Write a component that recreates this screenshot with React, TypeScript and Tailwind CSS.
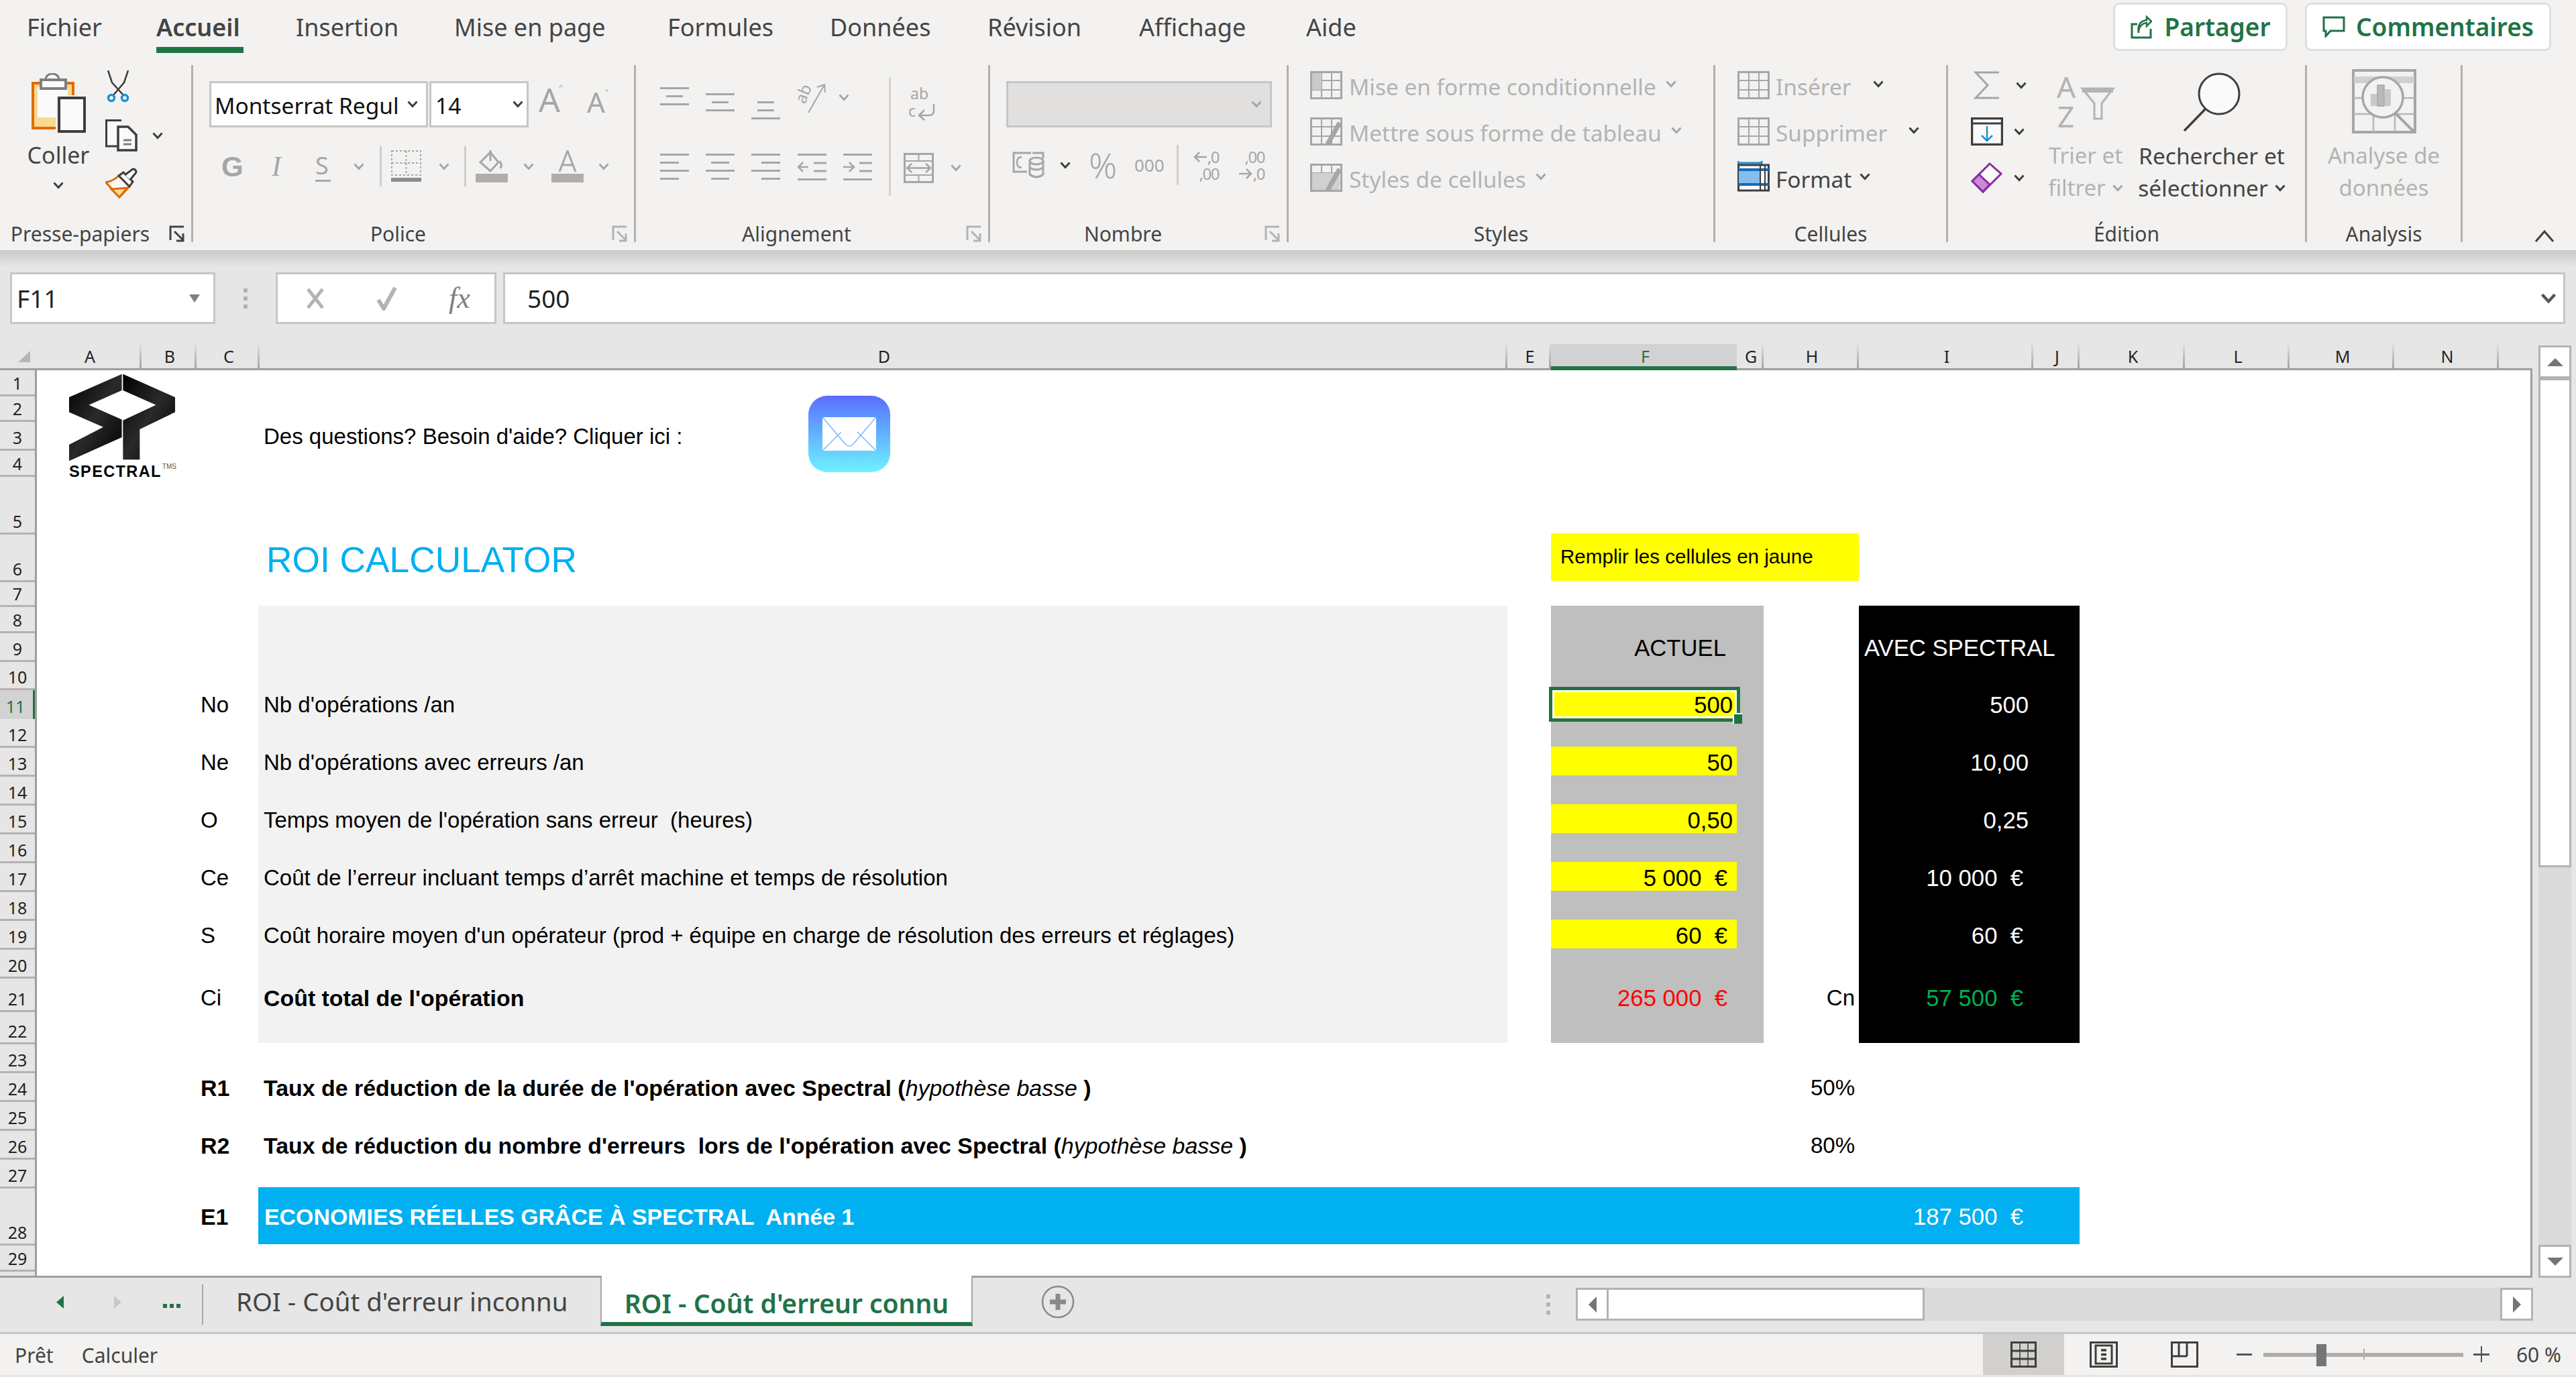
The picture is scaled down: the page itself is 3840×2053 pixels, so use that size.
import type { ReactNode } from "react";

const GREY = "#a6a6a6";
const DARK = "#3f3e3d";

/* ── Small drawn icons ─────────────────────────────── */

function Chev({ color = DARK, className = "" }: { color?: string; className?: string }) {
  return (
    <svg width="16" height="11" viewBox="0 0 16 11" className={`flex-none ${className}`}>
      <path d="M1.5 1.5 L8 8.5 L14.5 1.5" fill="none" stroke={color} strokeWidth="3" />
    </svg>
  );
}

function Launcher({ color = "#b3b3b3" }: { color?: string }) {
  return (
    <svg width="24" height="25" viewBox="0 0 24 25" className="absolute right-[9px] bottom-0">
      <path d="M2 22 V2 H22" fill="none" stroke={color} strokeWidth="3" />
      <path d="M8 9 L21 22 M21 12 V23 H11" fill="none" stroke={color} strokeWidth="3" />
    </svg>
  );
}

function Bars({ rows, className = "" }: { rows: [number, number][]; className?: string }) {
  // rows: [x, width] stacked at even spacing
  return (
    <div className={`flex flex-none flex-col w-[43px] gap-[9px] ${className}`}>
      {rows.map(([x, w], i) => (
        <svg key={i} width="43" height="3" className="block">
          <rect x={x} y="0" width={w} height="3" fill={GREY} />
        </svg>
      ))}
    </div>
  );
}

function PasteIcon() {
  return (
    <svg width="81" height="89" viewBox="0 0 81 89" className="block">
      <rect x="2" y="15" width="60" height="67" fill="#fbd98f" stroke="#e06c00" strokeWidth="4" />
      <path d="M9 21 H54 V66 H9 Z" fill="#fafafa" />
      <path d="M21 10 C21 -2 41 -2 41 10" fill="#fafafa" stroke="#7f7f7f" strokeWidth="3" />
      <rect x="14" y="10" width="37" height="13" fill="#fafafa" stroke="#7f7f7f" strokeWidth="4" />
      <rect x="36" y="33" width="45" height="56" fill="#f3f2f1" />
      <rect x="41" y="37" width="38" height="50" fill="#fafafa" stroke={DARK} strokeWidth="4" />
    </svg>
  );
}

function ScissorsIcon() {
  return (
    <svg width="41" height="50" viewBox="0 0 41 50" className="block">
      <path d="M4 0 L10 18 L28 38 M34 0 L28 18 L11 38" fill="none" stroke={DARK} strokeWidth="2.5" />
      <circle cx="9" cy="41" r="4.5" fill="#fafafa" stroke="#1e8fd5" strokeWidth="3.5" />
      <circle cx="29" cy="41" r="4.5" fill="#fafafa" stroke="#1e8fd5" strokeWidth="3.5" />
    </svg>
  );
}

function CopyIcon() {
  return (
    <svg width="48" height="48" viewBox="0 0 48 48" className="block">
      <path d="M24 1.5 H1.5 V40 H18" fill="#fafafa" stroke={DARK} strokeWidth="3" />
      <path d="M19 11 H34 L46 23 V46 H19 Z" fill="#fafafa" stroke={DARK} strokeWidth="3.5" />
      <path d="M27 31 H39 M27 37 H39" stroke="#7f7f7f" strokeWidth="3" />
    </svg>
  );
}

function BrushIcon() {
  return (
    <svg width="48" height="46" viewBox="0 0 48 46" className="block">
      <path d="M1 22 C10 20 16 16 20 12 L36 28 L21 44 Z" fill="#fafafa" stroke="#e06c00" strokeWidth="3" />
      <path d="M9 32 L33 30 L21 44 Z" fill="#fbd98f" stroke="#e06c00" strokeWidth="3" />
      <path d="M20 12 L27 7 L41 21 L36 28 Z" fill="#fafafa" stroke={DARK} strokeWidth="3" />
      <path d="M29 11 L41 2 Q46 2 46 7 L37 18" fill="#fafafa" stroke={DARK} strokeWidth="3" />
    </svg>
  );
}

function BordersIcon() {
  return (
    <svg width="45" height="48" viewBox="0 0 45 48" className="ml-[14px] flex-none">
      <rect x="1" y="1" width="43" height="36" fill="none" stroke={GREY} strokeWidth="2" strokeDasharray="3 3" />
      <path d="M22.5 1 V37 M1 19 H44" stroke={GREY} strokeWidth="2" strokeDasharray="3 3" />
      <rect x="0" y="41" width="45" height="6" fill="#8c8c8c" />
    </svg>
  );
}

function FillIcon() {
  return (
    <svg width="48" height="48" viewBox="0 0 48 48" className="flex-none">
      <path d="M7 18 L22 3 L34 18 L22 31 Z" fill="none" stroke={GREY} strokeWidth="3" />
      <path d="M22 0 V16 M36 16 Q40 22 37 27" fill="none" stroke={GREY} strokeWidth="3" />
      <rect x="0" y="35" width="48" height="13" fill="#b0aeac" />
    </svg>
  );
}

function TextColorIcon() {
  return (
    <svg width="48" height="48" viewBox="0 0 48 48" className="flex-none">
      <path d="M12 32 L24 1 L36 32 M16 22 H32" fill="none" stroke={GREY} strokeWidth="3" />
      <rect x="0" y="35" width="48" height="13" fill="#b0aeac" />
    </svg>
  );
}

function OrientationIcon() {
  return (
    <svg width="50" height="50" viewBox="0 0 50 50" className="flex-none overflow-visible">
      <text x="0" y="0" transform="translate(14 36) rotate(-68)" fontSize="24" fill={GREY} fontFamily="Noto Sans">ab</text>
      <path d="M19 48 L42 8 M32 10 L43 6 L44 18" fill="none" stroke={GREY} strokeWidth="2" />
    </svg>
  );
}

function IndentIcon({ flip = false }: { flip?: boolean }) {
  return (
    <svg width="43" height="40" viewBox="0 0 43 40" className="flex-none">
      <path d="M0 1.5 H43 M24 14 H43 M24 26 H43 M0 38.5 H43" stroke={GREY} strokeWidth="3" />
      {flip ? (
        <path d="M0 20 H15 M9 13 L16 20 L9 27" fill="none" stroke={GREY} strokeWidth="2.5" />
      ) : (
        <path d="M16 20 H1 M8 13 L1 20 L8 27" fill="none" stroke={GREY} strokeWidth="2.5" />
      )}
    </svg>
  );
}

function WrapIcon() {
  return (
    <svg width="42" height="50" viewBox="0 0 42 50" className="block overflow-visible">
      <text x="3" y="18" fontSize="23" fill={GREY} fontFamily="Noto Sans">ab</text>
      <text x="0" y="44" fontSize="23" fill={GREY} fontFamily="Noto Sans">c</text>
      <path d="M38 25 V36 Q38 42 30 42 H17 M24 34 L16 42 L24 49" fill="none" stroke={GREY} strokeWidth="2.5" />
    </svg>
  );
}

function MergeIcon() {
  return (
    <svg width="45" height="45" viewBox="0 0 45 45" className="block">
      <rect x="1.5" y="1.5" width="42" height="42" fill="none" stroke={GREY} strokeWidth="3" />
      <path d="M1 12 H44 M1 33 H44 M22.5 1 V12 M22.5 33 V44" stroke={GREY} strokeWidth="2" />
      <path d="M5 22.5 H40 M12 16 L5 22.5 L12 29 M33 16 L40 22.5 L33 29" fill="none" stroke={GREY} strokeWidth="2.5" />
    </svg>
  );
}

function CurrencyIcon() {
  return (
    <svg width="48" height="40" viewBox="0 0 48 40" className="flex-none">
      <path d="M28 2 H2 V30 H22" fill="none" stroke={GREY} strokeWidth="3" />
      <path d="M30 2 H46 V10" fill="none" stroke={GREY} strokeWidth="3" />
      <path d="M14 8 Q7 8 7 16 Q7 24 14 24" fill="none" stroke={GREY} strokeWidth="2.5" />
      <ellipse cx="36" cy="14" rx="10" ry="5" fill="#f3f2f1" stroke={GREY} strokeWidth="3" />
      <path d="M26 14 V34 Q36 42 46 34 V14 M26 24 Q36 30 46 24" fill="none" stroke={GREY} strokeWidth="3" />
    </svg>
  );
}

function DecimalText({ top, bottom, arrowTop }: { top: string; bottom: string; arrowTop: boolean }) {
  return (
    <div className="flex w-[46px] flex-none flex-col font-['Noto_Sans',sans-serif] text-[24px] leading-[25px] tracking-[-1.5px] whitespace-nowrap text-[#a6a6a6]">
      <div className="flex items-center justify-end">
        {arrowTop && (
          <svg width="20" height="16" viewBox="0 0 20 16" className="mr-[1px] flex-none">
            <path d="M20 8 H2 M9 1 L2 8 L9 15" fill="none" stroke={GREY} strokeWidth="2.5" />
          </svg>
        )}
        <span>{top}</span>
      </div>
      <div className="flex items-center justify-end">
        {!arrowTop && (
          <svg width="20" height="16" viewBox="0 0 20 16" className="mr-[1px] flex-none">
            <path d="M0 8 H18 M11 1 L18 8 L11 15" fill="none" stroke={GREY} strokeWidth="2.5" />
          </svg>
        )}
        <span>{bottom}</span>
      </div>
    </div>
  );
}

function TableBase({ color = GREY, children }: { color?: string; children?: ReactNode }) {
  return (
    <svg width="48" height="42" viewBox="0 0 48 42" className="flex-none">
      <rect x="1.5" y="1.5" width="45" height="39" fill="none" stroke={color} strokeWidth="3" />
      <path d="M17 1 V41 M32 1 V41 M1 14 H47 M1 28 H47" stroke={color} strokeWidth="2" />
      {children}
    </svg>
  );
}

function FormatIcon() {
  return (
    <svg width="48" height="48" viewBox="0 0 48 48" className="flex-none">
      <path d="M1 2 V8 M36 2 V8 M1 5 H36" stroke="#1e8fd5" strokeWidth="3" fill="none" />
      <rect x="1.5" y="8" width="45" height="38" fill="#fafafa" stroke={DARK} strokeWidth="3" />
      <rect x="2" y="15" width="32" height="22" fill="#85bdeb" />
      <path d="M1 15 H47 M1 37 H47" stroke="#0f6cbd" strokeWidth="4" />
      <path d="M34 8 V46 M41 8 V46" stroke={DARK} strokeWidth="2" />
    </svg>
  );
}

function SortIcon() {
  return (
    <svg width="86" height="80" viewBox="0 0 86 80" className="block overflow-visible">
      <text x="0" y="34" fontSize="44" fill="#b3b3b3" fontFamily="Noto Sans">A</text>
      <text x="1" y="78" fontSize="44" fill="#b3b3b3" fontFamily="Noto Sans">Z</text>
      <path d="M38 20 H84 L67 42 V65 H56 V42 Z" fill="none" stroke="#b3b3b3" strokeWidth="3" />
      <path d="M38 20 H84 V26 H38 Z" fill="#b3b3b3" />
    </svg>
  );
}

function FindIcon() {
  return (
    <svg width="87" height="88" viewBox="0 0 87 88" className="block">
      <circle cx="54" cy="32" r="30" fill="#fafafa" stroke={DARK} strokeWidth="3" />
      <path d="M33 55 L2 87" stroke={DARK} strokeWidth="3.5" />
    </svg>
  );
}

function AnalysisIcon() {
  return (
    <svg width="96" height="96" viewBox="0 0 96 96" className="block">
      <rect x="2" y="2" width="92" height="92" fill="#f3f2f1" stroke="#a6a6a6" strokeWidth="4" />
      <rect x="3" y="11" width="90" height="10" fill="#d0d0d0" />
      <path d="M3 43 H93 M3 67 H93 M32 67 V94 M64 67 V94" stroke="#b8b8b8" strokeWidth="2.5" />
      <ellipse cx="46" cy="42" rx="30" ry="30" fill="#f3f2f1" stroke="#a6a6a6" strokeWidth="3.5" />
      <rect x="28" y="37" width="10" height="18" fill="#c9c9c9" />
      <rect x="38" y="24" width="10" height="31" fill="#b9b9b9" stroke="#a6a6a6" strokeWidth="1.5" />
      <rect x="49" y="30" width="9" height="25" fill="#c9c9c9" />
      <path d="M65 66 L93 94" stroke="#a6a6a6" strokeWidth="4" />
    </svg>
  );
}

/* ── Ribbon ────────────────────────────────────────── */

function Group({
  className,
  label,
  launcher,
  children,
}: {
  className: string;
  label: string;
  launcher?: string;
  children: ReactNode;
}) {
  return (
    <div className={`relative flex h-[264px] flex-none flex-col border-r-[3px] border-[#b3b1af] ${className}`}>
      <div className="min-h-0 flex-1">{children}</div>
      <div className={`h-6 text-center text-[30px] leading-6 text-[#444] ${launcher ? "pr-[46px]" : ""}`}>{label}</div>
      {launcher && <Launcher color={launcher} />}
    </div>
  );
}

const RIBBON_TABS: [string, string][] = [
  ["Insertion", "ml-[78px] w-[154px]"],
  ["Mise en page", "ml-[82px] w-[237px]"],
  ["Formules", "ml-[81px] w-[160px]"],
  ["Données", "ml-[82px] w-[154px]"],
  ["Révision", "ml-[81px] w-[144px]"],
  ["Affichage", "ml-[82px] w-[167px]"],
  ["Aide", "ml-[82px] w-[79px]"],
];

function Ribbon() {
  return (
    <div className="h-[373px] bg-[#f3f2f1] font-['Noto_Sans',sans-serif]">
      <div className="flex h-[97px]">
        <div className="flex pl-[40px] text-[36px] leading-[50px] text-[#444]">
          <div className="w-[114px] pt-4">Fichier</div>
          <div className="ml-[79px] flex w-[130px] flex-col pt-4 font-semibold">
            <span>Accueil</span>
            <span className="mt-1 h-[9px] bg-[#217346]" />
          </div>
          {RIBBON_TABS.map(([t, w]) => (
            <div key={t} className={`pt-4 whitespace-nowrap ${w}`}>{t}</div>
          ))}
        </div>
        <div className="ml-auto flex gap-[26px] pt-1 pr-[37px] text-[37px] font-semibold text-[#217346]">
          <div className="flex h-[72px] w-[260px] items-center justify-center gap-[19px] rounded-[9px] border-[3px] border-[#e1dfdd] bg-white">
            <svg width="32" height="35" viewBox="0 0 32 35">
              <path d="M10 13 H2 V33 H30 V20" fill="none" stroke="#217346" strokeWidth="3" />
              <path d="M12 26 Q12 13 24 11 V16 L31 9 L24 2 V7 Q9 9 12 26 Z" fill="none" stroke="#217346" strokeWidth="2.5" />
            </svg>
            <span>Partager</span>
          </div>
          <div className="flex h-[72px] w-[367px] items-center justify-center gap-[16px] rounded-[9px] border-[3px] border-[#e1dfdd] bg-white">
            <svg width="34" height="32" viewBox="0 0 34 32">
              <path d="M2 2 H32 V22 H12 L5 30 V22 H2 Z" fill="none" stroke="#217346" strokeWidth="3" />
            </svg>
            <span>Commentaires</span>
          </div>
        </div>
      </div>

      <div className="flex">
        <Group className="w-[288px]" label="Presse-papiers" launcher="#444">
          <div className="flex">
            <div className="ml-[41px] flex w-[92px] flex-col items-center pt-3">
              <PasteIcon />
              <span className="mt-[8px] text-[34px] leading-[50px] text-[#444]">Coller</span>
              <Chev className="mt-[15px]" />
            </div>
            <div className="ml-6 flex flex-col pt-2">
              <ScissorsIcon />
              <div className="mt-[23px] flex items-center">
                <CopyIcon />
                <Chev className="ml-[22px]" />
              </div>
              <div className="mt-6">
                <BrushIcon />
              </div>
            </div>
          </div>
        </Group>

        <Group className="w-[660px]" label="Police" launcher="#b3b3b3">
          <div className="flex items-start pt-6 pl-6">
            <div className="flex h-[69px] w-[326px] items-center justify-between border-[3px] border-[#c6c6c6] bg-white pr-3 pl-[5px] text-[33.5px] text-[#111]">
              <span className="pt-[3px] whitespace-nowrap">Montserrat Regul</span>
              <Chev />
            </div>
            <div className="ml-[2px] flex h-[69px] w-[148px] items-center justify-between border-[3px] border-[#c6c6c6] bg-white pr-[5px] pl-[6px] text-[33.5px] text-[#111]">
              <span className="pt-[3px]">14</span>
              <Chev />
            </div>
            <div className="ml-[15px] flex w-[44px] items-start pt-[2px] text-[50px] leading-[50px] text-[#a6a6a6]">
              A<span className="-ml-[2px] text-[22px] leading-[22px]">˄</span>
            </div>
            <div className="ml-7 flex w-[42px] items-start pt-[10px] text-[42px] leading-[42px] text-[#a6a6a6]">
              A<span className="text-[20px] leading-[20px]">˅</span>
            </div>
          </div>
          <div className="mt-[28px] flex h-[60px] items-center text-[#a6a6a6]">
            <span className="ml-[42px] w-[30px] font-['Liberation_Sans',sans-serif] text-[42px] font-bold">G</span>
            <span className="ml-[45px] w-[18px] font-['Liberation_Serif',serif] text-[42px] italic">I</span>
            <span className="ml-[47px] w-[23px] border-b-[3px] border-[#a6a6a6] text-[36px] leading-[42px]">S</span>
            <Chev color={GREY} className="ml-[34px]" />
            <span className="ml-[23px] h-[60px] w-[3px] bg-[#cfcdcb]" />
            <BordersIcon />
            <Chev color={GREY} className="ml-[26px]" />
            <span className="ml-[22px] h-[60px] w-[3px] bg-[#cfcdcb]" />
            <span className="ml-[14px]"><FillIcon /></span>
            <Chev color={GREY} className="ml-[23px]" />
            <span className="ml-[26px]"><TextColorIcon /></span>
            <Chev color={GREY} className="ml-[22px]" />
          </div>
        </Group>

        <Group className="w-[528px]" label="Alignement" launcher="#b3b3b3">
          <div className="flex">
            <div className="flex w-[377px] flex-none flex-col pl-9">
              <div className="flex h-[50px] items-start pt-[33px]">
                <Bars rows={[[0, 43], [9, 25], [0, 43]]} />
                <Bars rows={[[0, 43], [9, 25], [0, 43]]} className="ml-[25px] pt-[9px]" />
                <Bars rows={[[9, 25], [9, 25], [0, 43]]} className="ml-[25px] pt-[21px]" />
                <span className="-mt-[10px] ml-[23px]"><OrientationIcon /></span>
                <Chev color={GREY} className="ml-[14px] mt-[10px]" />
              </div>
              <div className="mt-[82px] flex items-start">
                <Bars rows={[[0, 43], [0, 28], [0, 43], [0, 28]]} />
                <Bars rows={[[0, 43], [8, 27], [0, 43], [8, 27]]} className="ml-[25px]" />
                <Bars rows={[[0, 43], [15, 28], [0, 43], [15, 28]]} className="ml-[25px]" />
                <span className="ml-[26px]"><IndentIcon /></span>
                <span className="ml-[25px]"><IndentIcon flip /></span>
              </div>
            </div>
            <span className="mt-[18px] h-[177px] w-[3px] flex-none bg-[#d4d2d0]" />
            <div className="flex flex-col pt-[33px]">
              <div className="ml-[26px]"><WrapIcon /></div>
              <div className="mt-[48px] ml-[19px] flex items-center">
                <MergeIcon />
                <Chev color={GREY} className="ml-[25px]" />
              </div>
            </div>
          </div>
        </Group>

        <Group className="w-[445px]" label="Nombre" launcher="#b3b3b3">
          <div className="pt-6 pl-6">
            <div className="flex h-[69px] w-[396px] items-center justify-end border-[3px] border-[#c6c6c6] bg-[#e1e0de] pr-3">
              <Chev color={GREY} />
            </div>
          </div>
          <div className="mt-[26px] flex h-[60px] items-center text-[#a6a6a6]">
            <span className="ml-[33px]"><CurrencyIcon /></span>
            <Chev className="ml-[23px]" />
            <span className="ml-[27px] w-[46px] text-[52px] leading-[50px] font-light">%</span>
            <span className="ml-[22px] w-[46px] text-[26px]">000</span>
            <span className="ml-[17px] h-[60px] w-[3px] bg-[#cfcdcb]" />
            <span className="ml-[14px]"><DecimalText top=",0" bottom=",00" arrowTop /></span>
            <span className="ml-[22px]"><DecimalText top=",00" bottom=",0" arrowTop={false} /></span>
          </div>
        </Group>

        <Group className="w-[636px]" label="Styles">
          <div className="flex flex-col gap-[27px] pt-[9px] pl-8 text-[33.4px] leading-[38px] text-[#b3b3b3]">
            <div className="flex h-[42px] items-start">
              <TableBase><rect x="3" y="14" width="14" height="14" fill="#c9c9c9" /><rect x="3" y="3" width="14" height="11" fill="#c9c9c9" /></TableBase>
              <span className="mt-1 ml-[10px] whitespace-nowrap">Mise en forme conditionnelle</span>
              <Chev color={GREY} className="mt-[14px] ml-[14px]" />
            </div>
            <div className="flex h-[42px] items-start">
              <TableBase><path d="M26 40 L44 8" stroke="#a6a6a6" strokeWidth="7" /></TableBase>
              <span className="mt-1 ml-[10px] whitespace-nowrap">Mettre sous forme de tableau</span>
              <Chev color={GREY} className="mt-[14px] ml-[14px]" />
            </div>
            <div className="flex h-[42px] items-start">
              <TableBase><rect x="3" y="14" width="41" height="25" fill="#d0d0d0" /><path d="M26 40 L44 8" stroke="#a6a6a6" strokeWidth="7" /></TableBase>
              <span className="mt-1 ml-[10px] whitespace-nowrap">Styles de cellules</span>
              <Chev color={GREY} className="mt-[14px] ml-[14px]" />
            </div>
          </div>
        </Group>

        <Group className="w-[347px]" label="Cellules">
          <div className="flex flex-col gap-[27px] pt-[9px] pl-[33px] text-[33.4px] leading-[38px] text-[#b3b3b3]">
            <div className="flex h-[42px] items-start">
              <TableBase />
              <span className="mt-1 ml-[9px]">Insérer</span>
              <Chev className="mt-[14px] ml-8" />
            </div>
            <div className="flex h-[42px] items-start">
              <TableBase />
              <span className="mt-1 ml-[9px]">Supprimer</span>
              <Chev className="mt-[14px] ml-8" />
            </div>
            <div className="-mt-[6px] flex h-[48px] items-start text-[#444]">
              <FormatIcon />
              <span className="mt-[10px] ml-[9px]">Format</span>
              <Chev className="mt-[20px] ml-3" />
            </div>
          </div>
        </Group>

        <Group className="w-[535px]" label="Édition">
          <div className="flex">
            <div className="flex w-[146px] flex-none flex-col pt-[9px] pl-[34px]">
              <div className="flex h-[42px] items-center">
                <svg width="40" height="42" viewBox="0 0 40 42" className="ml-1">
                  <path d="M38 2 H3 L21 21 L3 40 H38" fill="none" stroke={GREY} strokeWidth="3" />
                </svg>
                <Chev className="ml-[23px]" />
              </div>
              <div className="mt-[27px] flex h-[42px] items-center">
                <svg width="48" height="42" viewBox="0 0 48 42">
                  <rect x="1.5" y="1.5" width="45" height="39" fill="#fafafa" stroke={DARK} strokeWidth="3.5" />
                  <path d="M2 9 H46" stroke={DARK} strokeWidth="3" />
                  <path d="M24 13 V35 M16 27 L24 35 L32 27" fill="none" stroke="#1e8fd5" strokeWidth="2.5" />
                </svg>
                <Chev className="ml-4" />
              </div>
              <div className="mt-[25px] flex h-[46px] items-center">
                <svg width="48" height="46" viewBox="0 0 48 46">
                  <path d="M28 2 L45 17 L18 44 L2 28 Z" fill="#fafafa" stroke="#8a2ca0" strokeWidth="3" />
                  <path d="M12 18 L28 33 L18 44 L2 28 Z" fill="#c98ad6" stroke="#8a2ca0" strokeWidth="3" />
                </svg>
                <Chev className="ml-4" />
              </div>
            </div>
            <div className="flex w-[118px] flex-none flex-col items-center text-[33px] leading-[48px] text-[#b3b3b3]">
              <div className="flex h-[111px] items-start pt-[15px]"><SortIcon /></div>
              <span>Trier et</span>
              <span className="flex items-center gap-[10px]">filtrer <Chev color={GREY} /></span>
            </div>
            <div className="ml-[14px] flex w-[230px] flex-none flex-col items-center text-[33.5px] leading-[48px] text-[#444]">
              <div className="flex h-[111px] items-start pt-[11px]"><FindIcon /></div>
              <span className="whitespace-nowrap">Rechercher et</span>
              <span className="flex items-center gap-[10px] whitespace-nowrap">sélectionner <Chev /></span>
            </div>
          </div>
        </Group>

        <Group className="w-[232px]" label="Analysis">
          <div className="flex flex-col items-center text-[33px] leading-[48px] text-[#b3b3b3]">
            <div className="flex h-[111px] items-start pt-[6px]"><AnalysisIcon /></div>
            <span className="whitespace-nowrap">Analyse de</span>
            <span>données</span>
          </div>
        </Group>

        <div className="flex flex-1 items-end justify-end pr-8">
          <svg width="30" height="18" viewBox="0 0 30 18">
            <path d="M2 17 L15 2 L28 17" fill="none" stroke={DARK} strokeWidth="3" />
          </svg>
        </div>
      </div>
    </div>
  );
}

/* ── Formula bar ───────────────────────────────────── */

function FormulaBar() {
  return (
    <div className="h-[140px] bg-[linear-gradient(#c9c9c9,#e6e6e6_25px)] pt-[33px] font-['Noto_Sans',sans-serif]">
      <div className="flex h-[77px]">
        <div className="ml-[15px] flex w-[306px] items-center justify-between border-[3px] border-[#c6c6c6] bg-white pr-5 pl-[7px] text-[37px] text-[#222]">
          <span>F11</span>
          <svg width="16" height="12" viewBox="0 0 16 12"><path d="M0 0 H16 L8 12 Z" fill="#7f7f7f" /></svg>
        </div>
        <div className="ml-[42px] flex w-[6px] flex-col justify-center gap-[6px]">
          <span className="h-[6px] bg-[#b3b3b3]" />
          <span className="h-[6px] bg-[#b3b3b3]" />
          <span className="h-[6px] bg-[#b3b3b3]" />
        </div>
        <div className="ml-[42px] flex w-[329px] items-center border-[3px] border-[#c6c6c6] bg-white pl-[41px]">
          <svg width="30" height="34" viewBox="0 0 30 34">
            <path d="M4 3 L26 31 M26 3 L4 31" stroke="#b3b3b3" strokeWidth="5" />
          </svg>
          <svg width="32" height="36" viewBox="0 0 32 36" className="ml-[76px]">
            <path d="M3 20 L11 33 L28 2" fill="none" stroke="#b3b3b3" strokeWidth="6" />
          </svg>
          <span className="ml-[76px] font-['Liberation_Serif',serif] text-[44px] leading-[44px] text-[#7f7f7f] italic">fx</span>
        </div>
        <div className="ml-[10px] flex w-[3074px] items-center justify-between border-[3px] border-[#c6c6c6] bg-white pr-[10px] pl-[33px] text-[37px] text-[#222]">
          <span>500</span>
          <Chev color="#555" className="h-[16px] w-[24px]" />
        </div>
      </div>
    </div>
  );
}

/* ── Worksheet ─────────────────────────────────────── */

const COLUMNS: [string, string][] = [
  ["A", "w-[156px]"],
  ["B", "w-[82px]"],
  ["C", "w-[94px]"],
  ["D", "w-[1860px]"],
  ["E", "w-[65px]"],
  ["F", "w-[277px]"],
  ["G", "w-[40px]"],
  ["H", "w-[142px]"],
  ["I", "w-[260px]"],
  ["J", "w-[69px]"],
  ["K", "w-[157px]"],
  ["L", "w-[156px]"],
  ["M", "w-[156px]"],
  ["N", "w-[156px]"],
];

function ColumnHeaders() {
  return (
    <div className="flex h-[39px] border-b-[3px] border-[#9e9e9e] text-[25px] leading-[36px] text-[#222]">
      <div className="flex w-[55px] flex-none items-end justify-end pr-[10px] pb-[9px]">
        <svg width="18" height="17" viewBox="0 0 18 17"><path d="M18 0 V17 H0 Z" fill="#b5b5b5" /></svg>
      </div>
      {COLUMNS.map(([c, w]) =>
        c === "F" ? (
          <div key={c} className={`-mb-[3px] flex-none border-b-[6px] border-[#217346] bg-[#d2d2d2] pl-[4px] text-center text-[#217346] ${w}`}>
            {c}
          </div>
        ) : (
          <div key={c} className={`flex flex-none ${w}`}>
            <span className="flex-1 pl-[5px] text-center">{c}</span>
            <span className="w-[3px] bg-gradient-to-b from-[#e0e0e0] to-[#a3a3a3]" />
          </div>
        ),
      )}
    </div>
  );
}

const ROW_HEADERS: [number, string][] = [
  [1, "h-[37px]"], [2, "h-[38px]"], [3, "h-[43px]"], [4, "h-[39px]"], [5, "h-[86px]"],
  [6, "h-[71px]"], [7, "h-[37px]"], [8, "h-[39px]"], [9, "h-[43px]"], [10, "h-[42px]"],
  [11, "h-[43px]"], [12, "h-[43px]"], [13, "h-[43px]"], [14, "h-[43px]"], [15, "h-[43px]"],
  [16, "h-[43px]"], [17, "h-[43px]"], [18, "h-[43px]"], [19, "h-[43px]"], [20, "h-[43px]"],
  [21, "h-[50px]"], [22, "h-[48px]"], [23, "h-[43px]"], [24, "h-[43px]"], [25, "h-[43px]"],
  [26, "h-[43px]"], [27, "h-[43px]"], [28, "h-[85px]"], [29, "h-[39px]"],
];

function RowHeaders() {
  return (
    <div className="h-full w-[55px] flex-none overflow-hidden border-r-[3px] border-[#9e9e9e] text-[25px] text-[#222]">
      <div className="pt-[2px]">
        {ROW_HEADERS.map(([n, h]) =>
          n === 11 ? (
            <div key={n} className={`relative -mr-[3px] flex items-end justify-center border-r-[6px] border-[#217346] bg-[#d2d2d2] pr-[3px] leading-[37px] text-[#217346] ${h}`}>
              {n}
            </div>
          ) : (
            <div key={n} className={`flex items-end justify-center border-b-[3px] border-[#b3b3b3] leading-[34px] ${h}`}>
              {n}
            </div>
          ),
        )}
      </div>
    </div>
  );
}

function SpectralLogo() {
  return (
    <div className="absolute top-[5px] left-[48px] flex w-[160px] flex-col">
      <svg width="158" height="131" viewBox="115 148 177 342" preserveAspectRatio="none" className="block">
        <defs>
          <linearGradient id="sheen" x1="0" y1="0" x2="1" y2="1">
            <stop offset="0" stopColor="#000" />
            <stop offset="0.5" stopColor="#2a2a2a" />
            <stop offset="1" stopColor="#000" />
          </linearGradient>
        </defs>
        <path d="M203 150 L115 240 V298 L172 356 L115 425 V488 L203 396 V327 L148 270 L203 213 Z" fill="url(#sheen)" />
        <path d="M205 150 L292 240 V298 L233 365 V483 H205 V330 L260 270 L205 213 Z" fill="url(#sheen)" />
      </svg>
      <div className="mt-[2px] flex items-start font-['Liberation_Sans',sans-serif] text-[23.5px] leading-[26px] font-bold tracking-[1.4px] text-black">
        SPECTRAL
        <span className="mt-[1px] ml-[1px] text-[10px] leading-[10px] font-normal tracking-normal text-[#555]">TMS</span>
      </div>
    </div>
  );
}

function MailIcon() {
  return (
    <div className="absolute top-[38px] left-[1150px] flex h-[114px] w-[122px] items-center justify-center rounded-[28px] bg-gradient-to-b from-[#5a6cff] to-[#6ef2ff]">
      <svg width="80" height="50" viewBox="0 0 80 50">
        <rect width="80" height="50" rx="3" fill="#fff" />
        <path d="M1 1 L34 40 Q40 46 46 40 L79 1 M1 49 L28 22 M79 49 L52 22" fill="none" stroke="#7cb6ff" strokeWidth="1.5" />
      </svg>
    </div>
  );
}

const textCell = "self-end whitespace-pre leading-[38px]";
const boldLabel = "font-bold text-[33.9px]";
const value = "text-[34.7px]";

function Sheet() {
  return (
    <div className="relative h-[1350px] flex-1 overflow-hidden bg-white font-['Liberation_Sans',Arial,sans-serif] text-[33px] text-black">
      <div className="grid h-full grid-cols-[156px_82px_92px_1862px_65px_277px_40px_142px_260px_69px_157px_156px_156px_156px_1fr] grid-rows-[37px_38px_43px_39px_86px_71px_37px_39px_43px_42px_43px_43px_43px_43px_43px_43px_43px_43px_43px_43px_50px_48px_43px_43px_43px_43px_43px_85px_39px_1fr]">
        {/* Filled blocks */}
        <div className="col-start-4 row-start-8 row-span-15 bg-[#f2f2f2]" />
        <div className="col-start-6 col-span-2 row-start-8 row-span-15 bg-[#bfbfbf]" />
        <div className="col-start-9 col-span-2 row-start-8 row-span-15 bg-black" />
        <div className="col-start-6 row-start-11 bg-[#ffff00]" />
        <div className="col-start-6 row-start-13 bg-[#ffff00]" />
        <div className="col-start-6 row-start-15 bg-[#ffff00]" />
        <div className="col-start-6 row-start-17 bg-[#ffff00]" />
        <div className="col-start-6 row-start-19 bg-[#ffff00]" />
        <div className="col-start-4 col-span-7 row-start-28 bg-[#00b0f0]" />

        <div className={`col-start-4 row-start-3 pl-2 ${textCell}`}>Des questions? Besoin d'aide? Cliquer ici :</div>
        <div className="col-start-4 row-start-6 self-end pl-[12px] text-[53.3px] leading-[62px] whitespace-pre text-[#00b0f0]">ROI CALCULATOR</div>
        <div className="col-start-6 col-span-3 row-start-6 flex items-center bg-[#ffff00] pl-[14px] text-[29.6px] whitespace-pre">Remplir les cellules en jaune</div>

        <div className={`col-start-6 row-start-9 pr-[16px] text-right ${value} ${textCell}`}>ACTUEL</div>
        <div className={`col-start-9 col-span-2 row-start-9 pl-2 text-white ${value} ${textCell}`}>AVEC SPECTRAL</div>

        <div className={`col-start-3 row-start-11 pl-[6px] ${textCell}`}>No</div>
        <div className={`col-start-4 row-start-11 pl-2 ${textCell}`}>Nb d'opérations /an</div>
        <div className={`col-start-6 row-start-11 pr-[6px] text-right ${value} ${textCell}`}>500</div>
        <div className={`col-start-9 row-start-11 pr-[7px] text-right text-white ${value} ${textCell}`}>500</div>

        <div className={`col-start-3 row-start-13 pl-[6px] ${textCell}`}>Ne</div>
        <div className={`col-start-4 row-start-13 pl-2 ${textCell}`}>Nb d'opérations avec erreurs /an</div>
        <div className={`col-start-6 row-start-13 pr-[6px] text-right ${value} ${textCell}`}>50</div>
        <div className={`col-start-9 row-start-13 pr-[7px] text-right text-white ${value} ${textCell}`}>10,00</div>

        <div className={`col-start-3 row-start-15 pl-[6px] ${textCell}`}>O</div>
        <div className={`col-start-4 row-start-15 pl-2 ${textCell}`}>Temps moyen de l'opération sans erreur  (heures)</div>
        <div className={`col-start-6 row-start-15 pr-[6px] text-right ${value} ${textCell}`}>0,50</div>
        <div className={`col-start-9 row-start-15 pr-[7px] text-right text-white ${value} ${textCell}`}>0,25</div>

        <div className={`col-start-3 row-start-17 pl-[6px] ${textCell}`}>Ce</div>
        <div className={`col-start-4 row-start-17 pl-2 ${textCell}`}>Coût de l’erreur incluant temps d’arrêt machine et temps de résolution</div>
        <div className={`col-start-6 row-start-17 pr-[14px] text-right ${value} ${textCell}`}>5 000  €</div>
        <div className={`col-start-9 row-start-17 pr-[15px] text-right text-white ${value} ${textCell}`}>10 000  €</div>

        <div className={`col-start-3 row-start-19 pl-[6px] ${textCell}`}>S</div>
        <div className={`col-start-4 row-start-19 pl-2 ${textCell}`}>Coût horaire moyen d'un opérateur (prod + équipe en charge de résolution des erreurs et réglages)</div>
        <div className={`col-start-6 row-start-19 pr-[14px] text-right ${value} ${textCell}`}>60  €</div>
        <div className={`col-start-9 row-start-19 pr-[15px] text-right text-white ${value} ${textCell}`}>60  €</div>

        <div className={`col-start-3 row-start-21 pl-[6px] ${textCell}`}>Ci</div>
        <div className={`col-start-4 row-start-21 pl-2 ${boldLabel} ${textCell}`}>Coût total de l'opération</div>
        <div className={`col-start-6 row-start-21 pr-[14px] text-right text-[#ff0000] ${value} ${textCell}`}>265 000  €</div>
        <div className={`col-start-8 row-start-21 pr-[6px] text-right ${textCell}`}>Cn</div>
        <div className={`col-start-9 row-start-21 pr-[15px] text-right text-[#00b050] ${value} ${textCell}`}>57 500  €</div>

        <div className={`col-start-3 row-start-24 pl-[6px] ${boldLabel} ${textCell}`}>R1</div>
        <div className={`col-start-4 row-start-24 pl-2 ${boldLabel} ${textCell}`}>
          Taux de réduction de la durée de l'opération avec Spectral (<span className="font-normal italic">hypothèse basse </span>)
        </div>
        <div className={`col-start-8 row-start-24 pr-[6px] text-right ${textCell}`}>50%</div>

        <div className={`col-start-3 row-start-26 pl-[6px] ${boldLabel} ${textCell}`}>R2</div>
        <div className={`col-start-4 row-start-26 pl-2 ${boldLabel} ${textCell}`}>
          Taux de réduction du nombre d'erreurs  lors de l'opération avec Spectral (<span className="font-normal italic">hypothèse basse </span>)
        </div>
        <div className={`col-start-8 row-start-26 pr-[6px] text-right ${textCell}`}>80%</div>

        <div className={`col-start-3 row-start-28 self-center pt-1 pl-[6px] whitespace-pre ${boldLabel}`}>E1</div>
        <div className={`col-start-4 row-start-28 self-center pt-1 pl-[9px] whitespace-pre text-white ${boldLabel}`}>ECONOMIES RÉELLES GRÂCE À SPECTRAL  Année 1</div>
        <div className={`col-start-9 row-start-28 self-center pt-1 pr-[15px] text-right whitespace-pre text-white ${value}`}>187 500  €</div>

        {/* Active cell F11 */}
        <div className="relative col-start-6 row-start-11">
          <div className="absolute -top-[3px] -right-[5px] -bottom-[6px] -left-[3px] border-[5px] border-[#217346]">
            <div className="h-full border-[3px] border-white" />
          </div>
          <div className="absolute -right-[8px] -bottom-[9px] h-[16px] w-[14px] border-t-2 border-l-2 border-white bg-[#217346]" />
        </div>
      </div>
      <SpectralLogo />
      <MailIcon />
    </div>
  );
}

function VerticalScrollbar() {
  return (
    <div className="mt-[2px] ml-[9px] flex h-[1390px] w-[49px] flex-col bg-[#dadada]">
      <div className="flex h-[52px] flex-none items-center justify-center border-[3px] border-b-[6px] border-[#b3b3b3] bg-white">
        <svg width="24" height="12" viewBox="0 0 24 12"><path d="M0 12 L12 0 L24 12 Z" fill="#757575" /></svg>
      </div>
      <div className="h-[726px] flex-none border-x-[3px] border-b-[3px] border-[#b3b3b3] bg-white" />
      <div className="flex-1" />
      <div className="flex h-[49px] flex-none items-center justify-center border-[3px] border-[#b3b3b3] bg-white">
        <svg width="24" height="12" viewBox="0 0 24 12"><path d="M0 0 H24 L12 12 Z" fill="#757575" /></svg>
      </div>
    </div>
  );
}

function SheetTabs() {
  return (
    <div className="flex h-[81px] font-['Noto_Sans',sans-serif] text-[38.4px]">
      <div className="flex h-[72px] items-center">
        <svg width="11" height="19" viewBox="0 0 11 19" className="ml-[84px]"><path d="M11 0 V19 L0 9.5 Z" fill="#217346" /></svg>
        <svg width="11" height="19" viewBox="0 0 11 19" className="ml-[75px]"><path d="M0 0 V19 L11 9.5 Z" fill="#c8c8c8" /></svg>
        <span className="mt-[12px] ml-[62px] flex w-[30px] gap-[4px]">
          <i className="h-[6px] w-[6px] bg-[#217346]" />
          <i className="h-[6px] w-[6px] bg-[#217346]" />
          <i className="h-[6px] w-[6px] bg-[#217346]" />
        </span>
        <span className="mt-[8px] ml-[28px] h-[60px] w-[2px] bg-[#a6a6a6]" />
        <span className="ml-[49px] w-[491px] whitespace-nowrap text-[#444]">ROI - Coût d'erreur inconnu</span>
      </div>
      <div className="-mt-[3px] ml-[52px] flex h-[75px] w-[555px] items-center justify-center border-x-2 border-b-[6px] border-x-[#a6a6a6] border-b-[#217346] bg-white pt-[12px] text-[39px] leading-[40px] font-semibold whitespace-nowrap text-[#217346]">
        ROI - Coût d'erreur connu
      </div>
      <div className="ml-[102px] flex h-[72px] items-center">
        <svg width="50" height="50" viewBox="0 0 50 50">
          <circle cx="25" cy="25" r="23" fill="none" stroke="#8a8a8a" strokeWidth="2.5" />
          <path d="M25 13 V37 M13 25 H37" stroke="#8a8a8a" strokeWidth="7" />
        </svg>
      </div>
      <div className="ml-[703px] flex h-[72px] w-[6px] flex-col justify-center gap-[6px] pt-2">
        <span className="h-[6px] bg-[#b3b3b3]" />
        <span className="h-[6px] bg-[#b3b3b3]" />
        <span className="h-[6px] bg-[#b3b3b3]" />
      </div>
      <div className="mt-[15px] ml-[38px] flex h-[49px] w-[1427px] bg-[#dadada]">
        <div className="flex w-[49px] items-center justify-center border-[3px] border-[#b3b3b3] bg-white">
          <svg width="12" height="24" viewBox="0 0 12 24"><path d="M12 0 V24 L0 12 Z" fill="#757575" /></svg>
        </div>
        <div className="w-[471px] border-y-[3px] border-r-[3px] border-[#b3b3b3] bg-white" />
        <div className="flex-1" />
        <div className="flex w-[49px] items-center justify-center border-[3px] border-[#b3b3b3] bg-white">
          <svg width="12" height="24" viewBox="0 0 12 24"><path d="M0 0 V24 L12 12 Z" fill="#757575" /></svg>
        </div>
      </div>
    </div>
  );
}

function StatusBar() {
  return (
    <div className="flex h-[64px] border-t-[3px] border-[#c8c6c4] bg-[#f3f2f1] font-['Noto_Sans',sans-serif] text-[30px] text-[#444]">
      <span className="ml-[22px] leading-[64px]">Prêt</span>
      <span className="ml-[42px] leading-[64px]">Calculer</span>
      <div className="ml-auto flex h-[61px] items-center pr-[22px]">
        <div className="flex h-full w-[121px] items-center justify-center bg-[#d2d0ce]">
          <svg width="39" height="39" viewBox="0 0 39 39">
            <rect x="1.5" y="1.5" width="36" height="36" fill="none" stroke={DARK} strokeWidth="3" />
            <path d="M1 14 H38 M1 26 H38" stroke={DARK} strokeWidth="3" />
            <path d="M14 1 V38 M26 1 V38" stroke={DARK} strokeWidth="1.5" />
          </svg>
        </div>
        <svg width="42" height="39" viewBox="0 0 42 39" className="ml-[38px]">
          <rect x="1.5" y="1.5" width="39" height="36" fill="none" stroke={DARK} strokeWidth="3" />
          <rect x="9" y="6" width="24" height="27" fill="none" stroke={DARK} strokeWidth="3" />
          <path d="M17 13 H25 M17 19.5 H25 M17 26 H25" stroke={DARK} strokeWidth="3.5" />
        </svg>
        <svg width="41" height="39" viewBox="0 0 41 39" className="ml-[79px]">
          <rect x="1.5" y="1.5" width="38" height="36" fill="none" stroke={DARK} strokeWidth="3" />
          <path d="M1 22 H24 M24 1 V22 M12 1 V22" stroke={DARK} strokeWidth="3" />
        </svg>
        <span className="ml-[57px] h-[3px] w-[23px] bg-[#555]" />
        <div className="relative ml-[17px] h-[6px] w-[298px] bg-[#b0aeac]">
          <span className="absolute -top-[13px] left-[79px] h-[33px] w-[15px] bg-[#767676]" />
          <span className="absolute -top-[6px] left-[149px] h-[16px] w-[2px] bg-[#b0aeac]" />
        </div>
        <div className="relative ml-[15px] h-[3px] w-[24px] bg-[#555]">
          <span className="absolute -top-[11px] left-[11px] h-[24px] w-[2px] bg-[#555]" />
        </div>
        <span className="ml-[40px] whitespace-nowrap">60 %</span>
      </div>
    </div>
  );
}

export default function App() {
  return (
    <div className="h-[2053px] w-[3840px] overflow-hidden bg-[#e6e6e6]">
      <Ribbon />
      <FormulaBar />
      <div className="flex h-[1392px]">
        <div className="flex w-[3775px] flex-none flex-col">
          <ColumnHeaders />
          <div className="flex h-[1353px] border-b-[3px] border-[#9e9e9e]">
            <RowHeaders />
            <div className="flex flex-1 border-r-[3px] border-[#9e9e9e]">
              <Sheet />
            </div>
          </div>
        </div>
        <VerticalScrollbar />
      </div>
      <SheetTabs />
      <StatusBar />
    </div>
  );
}
